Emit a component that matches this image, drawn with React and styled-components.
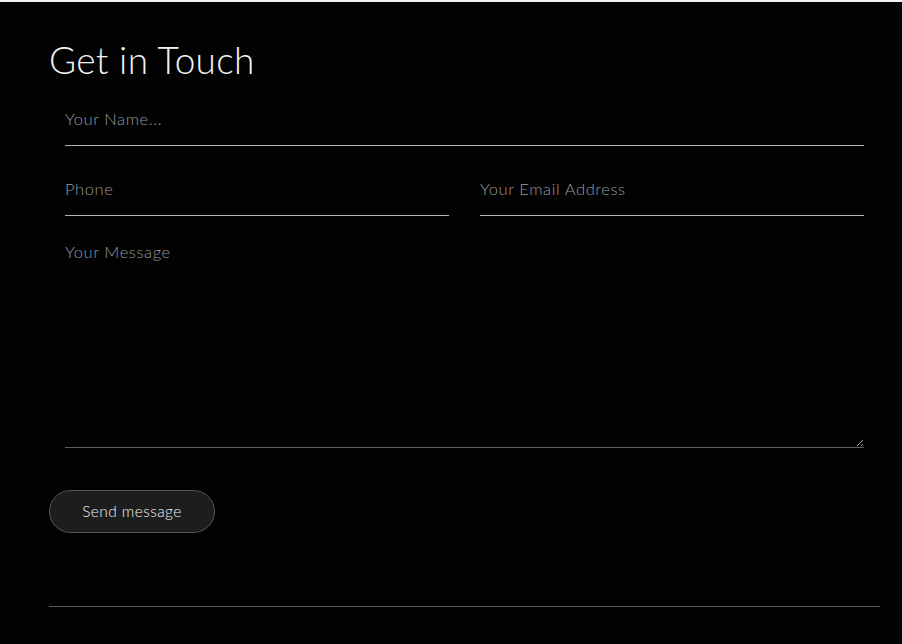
import React from "react";
import styled, { createGlobalStyle } from "styled-components";

const Global = createGlobalStyle`
  html, body { margin: 0; padding: 0; }
  body {
    background: #020202;
    border-top: 2px solid #f4f4f4;
    min-height: 642px;
    font-family: "Lato", "Noto Sans", sans-serif;
    color-scheme: dark;
  }
  * { box-sizing: border-box; }
`;

const Page = styled.section`
  padding: 36px 22px 37px 49px;
`;

const Title = styled.h2`
  margin: 0;
  font-family: "Lato", "Noto Sans", sans-serif;
  font-weight: 300;
  font-size: 37px;
  line-height: 44px;
  letter-spacing: 0.3px;
  color: #f2f2f2;
`;

const Form = styled.form`
  padding: 0 16px;
  display: flex;
  flex-direction: column;
  gap: 24px;
  margin-top: 18px;
`;

const Row = styled.div`
  display: grid;
  grid-template-columns: 1fr 1fr;
  column-gap: 31px;
`;

const fieldText = `
  font-family: "Lato", "Noto Sans", sans-serif;
  font-weight: 300;
  font-size: 16.5px;
  letter-spacing: 0.6px;
  color: #e0e0e0;
  &::placeholder { color: #9a9a9a; opacity: 1; }
`;

const Input = styled.input`
  display: block;
  width: 100%;
  height: 46px;
  padding: 0 0 7px;
  background: transparent;
  border: none;
  border-bottom: 1px solid #b5b5b5;
  outline: none;
  ${fieldText}
`;

const TextArea = styled.textarea`
  display: block;
  width: 100%;
  height: 216px;
  margin-top: -8px;
  padding: 10px 0 0;
  background: transparent;
  border: none;
  border-bottom: 1px solid #5e5e5e;
  outline: none;
  line-height: 20px;
  resize: vertical;
  ${fieldText}
`;

const Button = styled.button`
  display: block;
  margin-top: 42px;
  width: 166px;
  height: 43px;
  border-radius: 22px;
  border: 1px solid #555;
  background: #1d1d1d;
  color: #f2f2f2;
  font-family: "Lato", "Noto Sans", sans-serif;
  font-weight: 300;
  font-size: 15.5px;
  letter-spacing: 0.4px;
  padding: 0 0 2px;
  cursor: pointer;
`;

const Divider = styled.hr`
  margin: 73px 0 0;
  border: none;
  border-top: 1px solid #575757;
`;

export default function App() {
  return (
    <>
      <Global />
      <Page>
        <Title>Get in Touch</Title>
        <Form onSubmit={(e) => e.preventDefault()}>
          <Input placeholder="Your Name..." />
          <Row>
            <Input placeholder="Phone" />
            <Input placeholder="Your Email Address" />
          </Row>
          <TextArea placeholder="Your Message" />
        </Form>
        <Button type="button">Send message</Button>
        <Divider />
      </Page>
    </>
  );
}
